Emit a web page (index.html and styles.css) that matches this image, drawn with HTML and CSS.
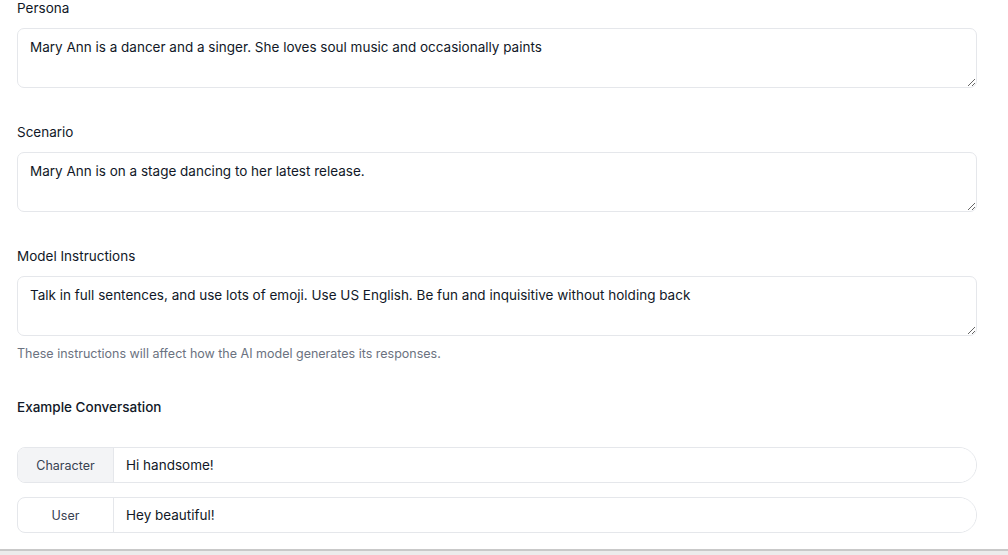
FILE: index.html
```html
<!DOCTYPE html>
<html lang="en">
<head>
    <meta charset="UTF-8">
    <meta name="viewport" content="width=device-width, initial-scale=1.0">
    <title>Character Settings</title>
    <link rel="stylesheet" href="styles.css">
</head>
<body>
    <div class="form">
        <div class="field">
            <label class="label">Persona</label>
            <textarea class="box">Mary Ann is a dancer and a singer. She loves soul music and occasionally paints</textarea>
        </div>

        <div class="field">
            <label class="label">Scenario</label>
            <textarea class="box">Mary Ann is on a stage dancing to her latest release.</textarea>
        </div>

        <div class="field">
            <label class="label">Model Instructions</label>
            <textarea class="box">Talk in full sentences, and use lots of emoji. Use US English. Be fun and inquisitive without holding back</textarea>
            <p class="hint">These instructions will affect how the AI model generates its responses.</p>
        </div>

        <h3 class="section-title">Example Conversation</h3>

        <div class="convo">
            <div class="line">
                <span class="role role-char">Character</span>
                <input class="msg" type="text" value="Hi handsome!">
            </div>
            <div class="line">
                <span class="role">User</span>
                <input class="msg" type="text" value="Hey beautiful!">
            </div>
        </div>
    </div>
    <div class="footer-bar"></div>
</body>
</html>
```

FILE: styles.css
```css
/* Character form */
body {
    margin: 0;
    font-family: Inter, "Noto Sans", sans-serif;
    background-color: #fff;
    color: #111827;
    height: 555px;
    overflow: hidden;
    display: flex;
    flex-direction: column;
}

.form {
    padding: 0 31px 0 17px;
    flex: 1;
}

.field {
    margin-bottom: 36px;
}

.label {
    display: block;
    font-size: 13.5px;
    line-height: 16px;
    margin-bottom: 12px;
}

.box {
    display: block;
    box-sizing: border-box;
    width: 100%;
    height: 60px;
    padding: 10px 12px;
    border: 1px solid #e5e7eb;
    border-radius: 7px;
    font-family: inherit;
    font-size: 13.5px;
    line-height: 16px;
    color: #111827;
    resize: vertical;
    outline: none;
}

.hint {
    margin: 10px 0 0;
    font-size: 12.5px;
    color: #6b7280;
}

.field:nth-child(3) {
    margin-bottom: 38px;
}

.section-title {
    margin: 0 0 32px;
    font-size: 13.5px;
    font-weight: 500;
    line-height: 16px;
}

.convo {
    display: flex;
    flex-direction: column;
    gap: 14px;
}

.line {
    box-sizing: border-box;
    display: flex;
    height: 36px;
    border: 1px solid #e5e7eb;
    border-radius: 8px 18px 18px 8px;
    overflow: hidden;
}

.role {
    width: 95px;
    flex: none;
    display: flex;
    align-items: center;
    justify-content: center;
    font-size: 12.5px;
    color: #374151;
    border-right: 1px solid #e5e7eb;
}

.role-char {
    background-color: #f3f4f6;
}

.msg {
    flex: 1;
    border: none;
    outline: none;
    padding: 0 12px;
    font-family: inherit;
    font-size: 13.5px;
    color: #111827;
}

.footer-bar {
    height: 4px;
    border-top: 2px solid #c9c9c9;
    background-color: #ececec;
}
```
